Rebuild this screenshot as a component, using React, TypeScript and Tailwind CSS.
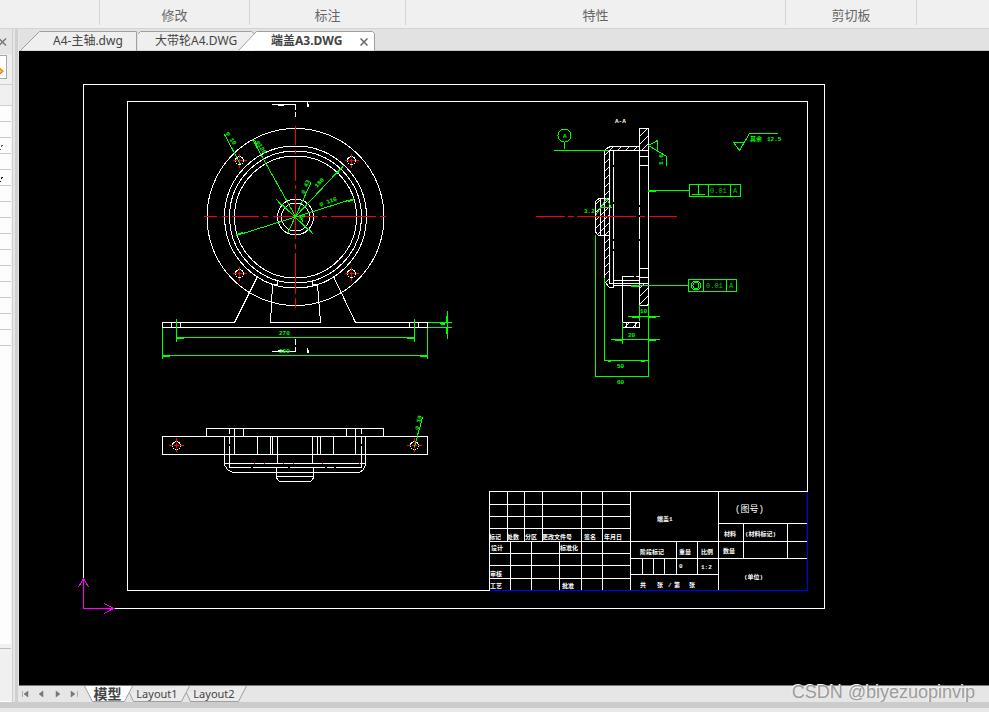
import { useState } from 'react';
import clsx from 'clsx';

const UI_FONT = "font-['Noto_Sans','Noto_Sans_CJK_SC',sans-serif]";
const CAD_FONT = "font-['Liberation_Mono','Noto_Sans_CJK_SC',monospace]";

const ribbonGroups = [
  { name: '', width: 'w-[100px]' },
  { name: '修改', width: 'w-[150px]' },
  { name: '标注', width: 'w-[156px]' },
  { name: '特性', width: 'w-[380px]' },
  { name: '剪切板', width: 'w-[131px]' },
];

const fileTabs = [
  { name: 'A4-主轴.dwg', width: 118, box: 'w-[118px] pl-[33px]' },
  { name: '大带轮A4.DWG', width: 118, box: 'w-[118px] pl-[17px]' },
  { name: '端盖A3.DWG', width: 138, box: 'w-[138px] pl-[33px] -ml-[18px]' },
];

const tabShapes = [
  'M0.5 21.5L19.5 2.5H116.5V21.5',
  'M-0.5 21.5V5.5L2.5 2.5H113.5L117.5 5.5V21.5',
  'M0.5 21.5L18.5 2.5H134.5L136.5 4.5V21.5',
];

function RibbonBar() {
  return (
    <div className="flex h-[29px] shrink-0 overflow-hidden border-b border-[#d4d4d4] bg-[#f0f0f0]">
      {ribbonGroups.map((group, i) => (
        <div
          key={i}
          className={clsx(
            'h-[25px] shrink-0 border-r border-[#d4d4d4] pt-[5px] text-center text-[13px] leading-5 text-[#666]',
            group.width
          )}
        >
          {group.name}
        </div>
      ))}
    </div>
  );
}

function FileTabs() {
  const [active, setActive] = useState(2);

  return (
    <div className="flex h-[22px] shrink-0 border-b border-[#c4c4c4] bg-[#e2e2e2] pl-px">
      {fileTabs.map((tab, i) => (
        <div key={tab.name} className={clsx('relative flex h-[22px] shrink-0 items-center pt-[2px]', tab.box)}>
          <svg className="absolute inset-0" width={tab.width} height="22" aria-hidden="true">
            <path d={tabShapes[i]} fill={active === i ? '#fff' : '#efefef'} stroke="#a0a0a0" />
          </svg>
          <button
            type="button"
            onClick={() => setActive(i)}
            className={clsx(
              'relative text-xs leading-5 whitespace-nowrap text-[#444]',
              active === i && 'font-bold'
            )}
          >
            {tab.name}
          </button>
          {i === 2 && (
            <button type="button" aria-label="关闭" className="absolute top-[5px] right-1 p-1">
              <svg width="8" height="8" className="block">
                <path d="M0.5 0.5l7 7M7.5 0.5l-7 7" stroke="#666" strokeWidth="1.5" />
              </svg>
            </button>
          )}
        </div>
      ))}
    </div>
  );
}

function PropertyPanel() {
  return (
    <div className="flex w-[19px] shrink-0">
      <div className="flex min-w-0 flex-1 flex-col border-r border-[#cfcfcf] bg-[#f0f0f0]">
        <div className="flex h-[25px] shrink-0 items-center bg-[#e5e5e5]">
          <svg width="7" height="8" aria-hidden="true">
            <path d="M-1 0.5l7 7M6 0.5l-7 7" stroke="#777" strokeWidth="1.5" fill="none" />
          </svg>
        </div>
        <button
          type="button"
          aria-label="快速选择"
          className="mt-px h-6 w-[7px] shrink-0 border border-l-0 border-[#a6a6a6] bg-white"
        >
          <svg width="5" height="22" aria-hidden="true">
            <path d="M0 12v6l4-3z" fill="#ffc040" />
            <path d="M-1 11.5l4 4l-4 3" stroke="#c66b00" fill="none" />
          </svg>
        </button>
        <div className="mt-[5px] h-[22px] shrink-0 border-t border-b border-[#cfcfcf]" />
        {Array.from({ length: 15 }, (_, i) => (
          <div key={i} className="mr-px h-4 shrink-0 border-b border-[#c8c8c8] bg-[#fdfdfd]">
            {(i === 2 || i === 4) && (
              <svg width="4" height="15" aria-hidden="true">
                <path d="M3 7.5H1.5V9M0 11.5h1" stroke={i === 2 ? '#555' : '#000'} fill="none" />
              </svg>
            )}
          </div>
        ))}
        <div className="mr-px flex-1 bg-[#fdfdfd]" />
        <div className="mr-px h-[5px] shrink-0 border-b border-[#bdbdbd]" />
        <div className="mr-px h-[53px] shrink-0 border-b border-white" />
      </div>
      <div className="w-[2px] bg-[#e6e6e6]" />
      <div className="w-[3px] bg-[#d0d0d0]" />
      <div className="w-px bg-[#e6e6e6]" />
    </div>
  );
}

function DrawingFrame() {
  return (
    <g stroke="#fff">
      <path d="M83.5 608.5V84.5H824.5V608.5H83.5" />
      <path d="M489.5 590.5H127.5V101.5H807.5V491.5" />
      <path d="M489.5 590.5H807.5V491.5" stroke="#00f" />
    </g>
  );
}

const boltHoles = [
  [239.5, 160.5],
  [351.5, 160.5],
  [239.5, 273.5],
  [351.5, 273.5],
];

function FrontView() {
  return (
    <>
      <g stroke="#fff">
        {[88.5, 71, 66, 61, 18, 14].map((r) => (
          <circle key={r} cx="295.5" cy="217" r={r} />
        ))}
        {boltHoles.map(([x, y]) => (
          <circle key={`${x}-${y}`} cx={x} cy={y} r="4" />
        ))}
        <path d="M257.5 276.5L234.5 322.5H162.5V327.5H427.5V322.5H355.5L333.5 276.5" />
        <path d="M277.5 281V285.5M312.5 281V285.5M272.5 284.5L270.5 322.5H320.5L317.5 284.5M272.5 284.5H277M312.5 284.5H317" />
        <path d="M171.5 322V328M180.5 322V328M409.5 322V328M418.5 322V328" />
        <path d="M272 104.5H295.5V110M295.5 112V117M278 105.5H284" />
        <path d="M272 351.5H295.5V347M295.5 345V339M278 350.5H284" />
        <path d="M307.5 102V106.5H309M308.5 104V107M307.5 348V352.5H309M308.5 350V353" />
      </g>
      <g stroke="#f00">
        <path d="M204 216.5H217M222 216.5H228M232 216.5H259M263 216.5H268M273 216.5H318M322 216.5H327M331 216.5H376M380 216.5H386" />
        <path d="M295.5 126V145M295.5 150V154M295.5 159V181M295.5 185V189M295.5 194V239M295.5 244V249M295.5 253V294M295.5 298V308" />
        {boltHoles.map(([x, y]) => (
          <path key={`${x}-${y}`} d={`M${x - 7} ${y}h4M${x - 2} ${y}h5M${x + 4} ${y}h3M${x} ${y - 7}v4M${x} ${y - 2}v5M${x} ${y + 4}v3`} />
        ))}
      </g>
      <g stroke="#0f0">
        <path d="M224.5 134.5L240.5 164.5M252.5 139.5L295.5 216.5M276 199L313.5 234.5M287.5 233.5L311 182.5M295.5 216.5L343.5 165.5M236.5 235.5L354.5 198.5" />
        <path d="M236 234.5l7-2M348 201.5l6-2M338 172.5l5-6M254.5 140l3 7M277 200l4 5M309 229l4 5M300 216l3 6" />
        <path d="M176.5 319V342M414.5 319V342M176 337.5H415M177 338.5H184M407 338.5H414" />
        <path d="M162.5 328V359M427.5 328V359M162 355.5H428M163 356.5H170M420 356.5H427" />
        <path d="M428 322.5H452M428 327.5H452M447.5 311V339M446.5 316V322M446.5 328V334" />
        <path d="M440 323.5H445M441 324.5H445" />
      </g>
      <g className="fill-[#00ff00] text-[6px] font-bold">
        <text x="279" y="335">270</text>
        <text x="279" y="353">300</text>
        <text transform="translate(226 133) rotate(60)">φ 10</text>
        <text transform="translate(256 142) rotate(60)">φ120</text>
        <text transform="translate(304 194) rotate(-65)">φ 43</text>
        <text transform="translate(317 188) rotate(-47)">180</text>
        <text transform="translate(320 206) rotate(-17)">φ 116</text>
        <text transform="translate(301 221) rotate(-47)">36</text>
      </g>
    </>
  );
}

function TopView() {
  return (
    <>
      <g stroke="#fff">
        <path d="M162.5 436.5H427.5V454.5H162.5zM206.5 436.5V428.5H383.5V436.5" />
        <path d="M234.5 428V454M243.5 428V436M346.5 428V436M355.5 428V454" />
        <path d="M224.5 436V465L227.5 469.5L232.5 472.5H359.5L363.5 469.5L365.5 465V436" />
        <path d="M229.5 428V434M229.5 436V444M229.5 446V467.5H251M253 467.5H288M290 467.5H325M327 467.5H334M336 467.5H361.5V446M361.5 444V436M361.5 434V428" />
        <path d="M257.5 436V454M270.5 436V454M272.5 436V454M277.5 436V463M312.5 436V463M317.5 436V454M320.5 436V454M333.5 436V454" />
        <path d="M224 463.5H366M276.5 467V478L279.5 481.5H310.5L313.5 478V467M276 476.5H314" />
        <circle cx="176.5" cy="445.5" r="4" />
        <circle cx="414.5" cy="445.5" r="4" />
      </g>
      <g stroke="#f00">
        <path d="M169 445.5h4M174 445.5h5M180 445.5h4M176.5 438v4M176.5 443v5M176.5 449v3" />
        <path d="M407 445.5h4M412 445.5h5M418 445.5h4M414.5 438v4M414.5 443v5M414.5 449v3" />
        <path d="M254 463.5h1M264 463.5h1M283 463.5h1M293 463.5h1M322 463.5h1M359 463.5h1" />
      </g>
      <path d="M422.5 417.5L414.5 447M417.5 433V438" stroke="#0f0" />
      <text className="fill-[#00ff00] text-[6px] font-bold" transform="translate(418 430) rotate(-74)">φ 19</text>
    </>
  );
}

function SectionView() {
  return (
    <>
      <g stroke="none" fill="url(#hatch)">
        <path d="M640 129h8v21h-8zM640 284h8v21h-8z" />
        <path d="M605 151L608 147H639V151H610V283H605zM596 201l3-2h6v36h-6l-3-2z" />
        <path d="M623 323h16v4h-16z" />
      </g>
      <g stroke="#fff">
        <path d="M639.5 205V128.5H648.5V305.5H639.5V241M639.5 207V215M639.5 217V239" />
        <path d="M639 150.5H648M639 156.5H648M639 165.5H648M639 268.5H648M639 277.5H648M639 283.5H648" />
        <path d="M639 146.5H610.5L606.5 148.5L604.5 152V281.5L609.5 287.5H613.5M639 150.5H609.5V283.5H639" />
        <path d="M613.5 150V165M613.5 167V202M613.5 204V239M613.5 241V249M613.5 251V287" />
        <path d="M613 280.5H639M613 285.5H632M622 276.5H634M636 276.5H639M622.5 276V327.5H639.5V322.5H622M626.5 323V327M635.5 323V327" />
        <path d="M609 198.5H599L595.5 201.5V232L598.5 235.5H609M600.5 199V235" />
      </g>
      <path
        d="M536 216.5H565M568 216.5H574M577 216.5H636M640 216.5H645M649 216.5H677"
        stroke="#f00"
      />

      {/* datum, surface finish and tolerance callouts */}
      <g stroke="#0f0">
        <circle cx="564.5" cy="135.5" r="6.5" />
        <path d="M564.5 142V149M554 150.5H609" />
        <path d="M648.5 145.5L657.5 140.5V151.5M648.5 145.5L666.5 156.5V166" />
        <path d="M595.5 215.5L606.5 198.5L611.5 207.5H600.5" />
        <path d="M743.5 142.5H733.5L739.5 150.5L749.5 133.5H778" />
        <path d="M648 190.5H689M648 191.5H656" />
        <path d="M689.5 184.5H740.5V196.5H689.5zM708.5 184V196M730.5 184V196M698.5 184V194M692 194.5H705" />
        <path d="M631 285.5H688M631 286.5H639" />
        <path d="M688.5 279.5H736.5V291.5H688.5zM703.5 279V291M726.5 279V291" />
        <circle cx="696" cy="285.5" r="4.5" />
        <circle cx="696" cy="285.5" r="3" />
      </g>

      <g stroke="#0f0">
        <path d="M595.5 235V376.5H648.5V305M604.5 278V360.5H648M608 361.5H611M641 361.5H645" />
        <path d="M628 316.5H660M632 317.5H639M649 317.5H656M639.5 305V321" />
        <path d="M611 339.5H660M615 340.5H622M649 340.5H656M622.5 322V344" />
      </g>
      <g className="fill-[#00ff00] text-[6px] font-bold">
        <text x="563" y="138">A</text>
        <text x="584" y="213">3.2</text>
        <text x="767" y="141">12.5</text>
        <text x="750" y="141">其余</text>
        <text transform="translate(663 165) rotate(-90)">1.6</text>
        <text x="640" y="313">10</text>
        <text x="628" y="337">20</text>
        <text x="617" y="368">50</text>
        <text x="617" y="384">60</text>
      </g>
      <g className="fill-[#00c800] text-[7px]">
        <text x="710" y="193">0.01</text>
        <text x="733" y="193">A</text>
        <text x="706" y="288">0.01</text>
        <text x="729" y="288">A</text>
      </g>
      <text x="615" y="123" className="fill-white text-[6px] font-bold">A-A</text>
    </>
  );
}

const titleTexts: [number, number, string][] = [
  [489, 539, '标记'],
  [507, 539, '处数'],
  [525, 539, '分区'],
  [542, 539, '更改文件号'],
  [584, 539, '签名'],
  [604, 539, '年月日'],
  [491, 550, '设计'],
  [560, 550, '标准化'],
  [490, 576, '审核'],
  [490, 588, '工艺'],
  [562, 588, '批准'],
  [640, 554, '阶段标记'],
  [679, 554, '重量'],
  [701, 554, '比例'],
  [679, 568, '0'],
  [701, 569, '1:2'],
  [640, 587, '共'],
  [657, 587, '张'],
  [668, 587, '/'],
  [674, 587, '第'],
  [689, 587, '张'],
  [724, 536, '材料'],
  [745, 536, '(材料标记)'],
  [723, 553, '数量'],
];

function TitleBlock() {
  return (
    <>
      <g stroke="#fff">
        <path d="M489.5 590V491.5H807M630.5 491V590M718.5 491V590" />
        <path d="M489 504.5H630M489 516.5H630M489 528.5H630M489 541.5H807M489 553.5H630M489 565.5H630M489 578.5H630" />
        <path d="M507.5 491V541M524.5 491V541M542.5 491V541M581.5 491V590M602.5 491V590M510.5 541V590M531.5 541V590M559.5 541V590" />
        <path d="M630 558.5H807M630 574.5H718M676.5 541V574M697.5 541V574M642.5 558V574M653.5 558V574M664.5 558V574" />
        <path d="M718 523.5H807M743.5 523V558M787.5 523V558" />
      </g>
      <g className="fill-white">
        <g className="text-[6px] font-bold">
          {titleTexts.map(([x, y, label], i) => (
            <text key={i} x={x} y={y}>{label}</text>
          ))}
          <text x="657" y="521">端盖1</text>
          <text x="744" y="579">(单位)</text>
        </g>
        <text x="735" y="512" className="text-[9px]">(图号)</text>
      </g>
    </>
  );
}

function DrawingCanvas() {
  return (
    <div className="min-h-0 flex-1 bg-black">
      <svg
        viewBox="19 51 970 634"
        preserveAspectRatio="xMinYMin meet"
        className={clsx('block h-full w-full', CAD_FONT)}
        fill="none"
        shapeRendering="crispEdges"
        role="img"
        aria-label="端盖A3"
      >
        <defs>
          <pattern id="hatch" width="8" height="8" patternUnits="userSpaceOnUse">
            <path d="M-1 9L9 -1" stroke="#fff" />
          </pattern>
        </defs>
        <DrawingFrame />
        <FrontView />
        <TopView />
        <SectionView />
        <TitleBlock />
        <path
          d="M83.5 578V608.5H114M78.5 587L83.5 578.5L88.5 587M104 603.5L113.5 608.5L104 613.5"
          stroke="#f0f"
        />
      </svg>
    </div>
  );
}

const navIcons = [
  { label: '第一个', d: 'M0.5 1v6M6 1v6L2 4z' },
  { label: '上一个', d: 'M5 1v6L1 4z' },
  { label: '下一个', d: 'M2 1v6l4-3z' },
  { label: '最后一个', d: 'M1 1v6l4-3zM7.5 1v6' },
];

const layoutTabs = [
  { name: '模型', width: 49, box: 'w-[49px] pr-[2px]', shape: 'M0.5 0L8.5 15.5H40.5L48.5 0' },
  { name: 'Layout1', width: 61, box: 'w-[61px] pr-[5px] -ml-[4px]', shape: 'M0.5 7L4.5 15.5H52.5L60.5 0' },
  { name: 'Layout2', width: 61, box: 'w-[61px] pr-[5px] -ml-[4px]', shape: 'M0.5 7L4.5 15.5H52.5L60.5 0' },
];

function LayoutBar() {
  const [active, setActive] = useState(0);

  return (
    <div className="flex h-[17px] shrink-0 border-t border-[#777] bg-[#e6e6e6] pl-[3px]">
      <div className="flex w-[62px] shrink-0 items-center gap-2">
        {navIcons.map((icon) => (
          <button key={icon.label} type="button" aria-label={icon.label}>
            <svg width="8" height="8" className="block">
              <path d={icon.d} fill="#777" stroke="#777" strokeWidth="0.5" />
            </svg>
          </button>
        ))}
      </div>
      {layoutTabs.map((tab, i) => (
        <button
          key={tab.name}
          type="button"
          onClick={() => setActive(i)}
          className={clsx(
            'relative h-4 shrink-0 text-center whitespace-nowrap text-[#444]',
            active === i ? 'text-sm leading-3 font-bold' : 'text-[11px] leading-3',
            tab.box
          )}
        >
          <svg className="absolute inset-0" width={tab.width} height="16" aria-hidden="true">
            <path d={tab.shape} fill={active === i ? '#fff' : '#ebebeb'} stroke="#a0a0a0" />
          </svg>
          <span className="relative">{tab.name}</span>
        </button>
      ))}
    </div>
  );
}

export default function App() {
  return (
    <div className={clsx('relative flex h-screen flex-col overflow-hidden bg-[#e8e8e8]', UI_FONT)}>
      <RibbonBar />
      <div className="flex min-h-0 flex-1">
        <PropertyPanel />
        <div className="flex min-w-0 flex-1 flex-col">
          <FileTabs />
          <DrawingCanvas />
          <LayoutBar />
        </div>
      </div>
      <div className="h-[6px] shrink-0 bg-[#cccccc]" />
      <div className="h-1 shrink-0" />
      <div className="absolute right-[14px] bottom-2 font-['Liberation_Sans',sans-serif] text-lg leading-6 text-[#9c9c9c] [text-shadow:-1px_-1px_0_#f4f4f4]">
        CSDN @biyezuopinvip
      </div>
    </div>
  );
}
